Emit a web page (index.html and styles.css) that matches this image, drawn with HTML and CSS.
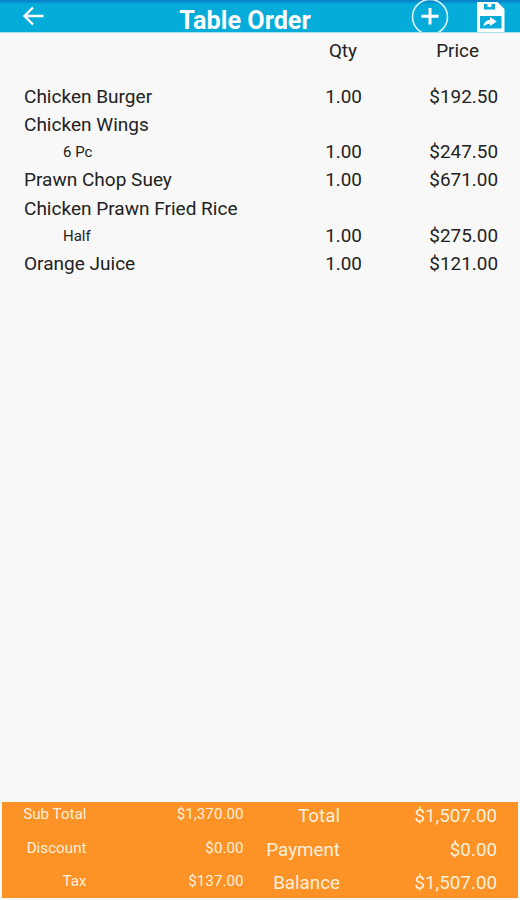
FILE: index.html
```html
<!DOCTYPE html>
<html lang="en">
<head>
    <meta charset="UTF-8">
    <meta name="viewport" content="width=device-width, initial-scale=1.0">
    <title>Table Order</title>
    <link rel="stylesheet" href="styles.css">
</head>
<body>

    <div class="screen">
        <!-- Top bar -->
        <header class="topbar">
            <svg class="icon-back" width="22" height="20" viewBox="0 0 22 20">
                <path d="M11 1.5 L2.5 10 L11 18.5 M2.5 10 H21.5" fill="none" stroke="#fff" stroke-width="2.4"/>
            </svg>
            <h1>Table Order</h1>
            <svg class="icon-add" width="38" height="32" viewBox="0 0 38 32">
                <circle cx="19" cy="17" r="17.5" fill="none" stroke="#d9f5fc" stroke-width="1.6"/>
                <path d="M19 8 V24.5 M10.5 16.2 H27.5" stroke="#fff" stroke-width="3"/>
            </svg>
            <svg class="icon-save" width="28" height="30" viewBox="0 0 28 30">
                <path d="M0 0 H20.5 L27.5 7 V30 H0 Z" fill="#fff"/>
                <path d="M7 2 H10.5 V5 H14.5 V2 H18 V7.5 H7 Z" fill="#05acd9"/>
                <path d="M3 14 H24.5 V26.5 H3 Z" fill="#05acd9"/>
                <path d="M6.5 24.5 C7 20 10 18 13 18 V15 L19.8 19.5 L13 24 V22 C10.5 22 8.5 22.5 6.5 24.5 Z" fill="#fff"/>
            </svg>
        </header>

        <!-- Order items -->
        <main class="order">
            <div class="row head">
                <span></span>
                <span class="qty">Qty</span>
                <span class="price">Price</span>
            </div>
            <div class="row">
                <span class="name">Chicken Burger</span>
                <span class="qty">1.00</span>
                <span class="price">$192.50</span>
            </div>
            <div class="row">
                <span class="name full">Chicken Wings</span>
                <span class="variant">6 Pc</span>
                <span class="qty">1.00</span>
                <span class="price">$247.50</span>
            </div>
            <div class="row">
                <span class="name">Prawn Chop Suey</span>
                <span class="qty">1.00</span>
                <span class="price">$671.00</span>
            </div>
            <div class="row">
                <span class="name full">Chicken Prawn Fried Rice</span>
                <span class="variant">Half</span>
                <span class="qty">1.00</span>
                <span class="price">$275.00</span>
            </div>
            <div class="row">
                <span class="name">Orange Juice</span>
                <span class="qty">1.00</span>
                <span class="price">$121.00</span>
            </div>
        </main>

        <!-- Totals -->
        <footer class="totals">
            <span class="small">Sub Total</span>
            <span class="small">$1,370.00</span>
            <span class="big">Total</span>
            <span class="big">$1,507.00</span>

            <span class="small">Discount</span>
            <span class="small">$0.00</span>
            <span class="big">Payment</span>
            <span class="big">$0.00</span>

            <span class="small">Tax</span>
            <span class="small">$137.00</span>
            <span class="big">Balance</span>
            <span class="big">$1,507.00</span>
        </footer>
    </div>

</body>
</html>
```
FILE: styles.css
```css
* {
    box-sizing: border-box;
}

body {
    margin: 0;
    font-family: Roboto, sans-serif;
    background-color: #f8f8f8;
    color: #222;
}

.screen {
    display: flex;
    flex-direction: column;
    height: 900px;
    padding-bottom: 2px;
    overflow: hidden;
}

.topbar {
    display: grid;
    grid-template-columns: 156px 178px 77px 66px 43px;
    height: 33px;
    background: linear-gradient(#0a82c8 0, #0a8ccd 2px, #05acd9 4px);
    border-bottom: 1px solid #a5e2f0;
}

.topbar h1 {
    grid-column: 2;
    margin: 0;
    padding-top: 5px;
    font-size: 25.2px;
    line-height: 32px;
    font-weight: 700;
    color: #fff;
    text-align: center;
    white-space: nowrap;
}

.icon-back {
    margin: 6px 0 0 22px;
}

.icon-add {
    grid-column: 4;
}

.icon-save {
    margin-top: 2px;
}

.order {
    flex: 1;
}

.row {
    display: grid;
    grid-template-columns: 286px 76px 136px;
    border-bottom: 1px solid #f3f3f3;
    font-size: 18.9px;
    line-height: 26.8px;
}

.head {
    height: 50.6px;
    padding-top: 5px;
    border-bottom: none;
}

.name {
    padding-left: 24px;
    font-size: 19.05px;
}

.full {
    grid-column: 1 / -1;
    line-height: 28px;
}

.variant {
    padding-left: 63px;
    font-size: 15px;
}

.qty,
.price {
    text-align: right;
}

.head .qty {
    padding-right: 5px;
}

.head .price {
    padding-right: 19px;
}

.totals {
    display: grid;
    grid-template-columns: 84.5px 157px 96.5px 157px;
    grid-auto-rows: 33.5px;
    height: 96px;
    margin: 0 2px;
    background-color: #fd9226;
    color: #fff0dc;
    text-align: right;
}

.small {
    font-size: 15.2px;
    line-height: 24px;
}

.big {
    font-size: 18.8px;
    line-height: 29px;
}
```
